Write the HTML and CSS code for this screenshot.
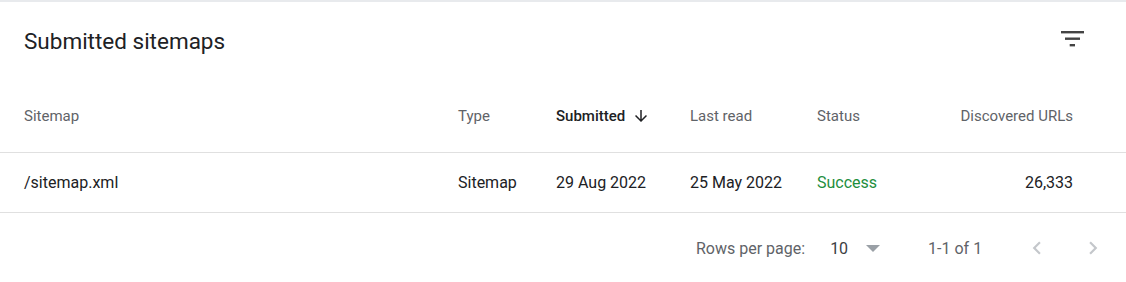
FILE: index.html
```html
<!DOCTYPE html>
<html>
<head>
<meta charset="utf-8">
<link rel="stylesheet" href="styles.css">
</head>
<body>
<div class="card">
  <div class="title-row">
    <h2 class="title">Submitted sitemaps</h2>
    <svg class="filter" width="24" height="16" viewBox="0 0 24 16">
      <rect x="0" y="0" width="23" height="2.4" fill="#444"/>
      <rect x="4" y="6.5" width="15" height="2.4" fill="#444"/>
      <rect x="8.7" y="13" width="5.3" height="2.4" fill="#444"/>
    </svg>
  </div>
  <div class="grid head">
    <div>Sitemap</div>
    <div>Type</div>
    <div class="sorted">Submitted
      <svg class="arrow" width="18" height="18" viewBox="0 0 24 24"><path d="M20 12l-1.41-1.41L13 16.17V4h-2v12.17l-5.58-5.59L4 12l8 8 8-8z" fill="#202124"/></svg>
    </div>
    <div>Last read</div>
    <div>Status</div>
    <div class="num">Discovered URLs</div>
  </div>
  <div class="grid row">
    <div>/sitemap.xml</div>
    <div>Sitemap</div>
    <div>29 Aug 2022</div>
    <div>25 May 2022</div>
    <div class="ok">Success</div>
    <div class="num">26,333</div>
  </div>
  <div class="pager">
    <span class="label">Rows per page:</span>
    <span class="select">10
      <svg class="caret" width="14" height="7" viewBox="0 0 14 7"><path d="M0 0h14L7 7z" fill="#9aa0a6"/></svg>
    </span>
    <span class="range">1-1 of 1</span>
    <span class="nav">
      <svg width="26" height="26" viewBox="0 0 24 24"><path d="M15.41 7.41L14 6l-6 6 6 6 1.41-1.41L10.83 12z" fill="#c4c7cb"/></svg>
      <svg width="26" height="26" viewBox="0 0 24 24"><path d="M10 6L8.59 7.41 13.17 12l-4.58 4.59L10 18l6-6z" fill="#c4c7cb"/></svg>
    </span>
  </div>
</div>
</body>
</html>
```

FILE: styles.css
```css
* { box-sizing: border-box; }
html, body { margin: 0; padding: 0; background: #fff; }
body {
  font-family: Roboto, "Liberation Sans", Arial, sans-serif;
  color: #202124;
  width: 1126px;
  height: 282px;
  overflow: hidden;
}
.card {
  border-top: 2px solid #e8eaed;
}
.title-row {
  display: flex;
  align-items: center;
  justify-content: space-between;
  height: 78px;
  padding: 0 41px 0 24px;
}
.title {
  margin: 0;
  font-size: 22.5px;
  font-weight: 400;
  color: #202124;
  letter-spacing: 0;
}
.filter { display: block; margin-top: -5px; }
.grid {
  display: grid;
  grid-template-columns: 434px 98px 134px 127px 100px 1fr;
  align-items: center;
  padding: 0 53px 0 24px;
  border-bottom: 1px solid #e0e0e0;
}
.head {
  height: 73px;
  font-size: 15px;
  color: #5f6368;
}
.head .sorted {
  color: #202124;
  font-weight: 500;
  display: flex;
  align-items: center;
  gap: 7px;
}
.arrow { display: block; }
.row {
  height: 60px;
  padding-bottom: 1px;
  font-size: 16px;
  color: #202124;
}
.num { text-align: right; }
.ok { color: #1e8e3e; }
.pager {
  display: flex;
  align-items: center;
  height: 70px;
  padding-left: 696px;
  font-size: 16px;
  color: #5f6368;
}
.select {
  display: flex;
  align-items: center;
  margin-left: 25px;
  color: #3c4043;
}
.caret { margin-left: 18px; display: block; }
.range { margin-left: 48px; }
.nav {
  display: flex;
  gap: 30px;
  margin-left: 42px;
}
.nav svg { display: block; }
```
